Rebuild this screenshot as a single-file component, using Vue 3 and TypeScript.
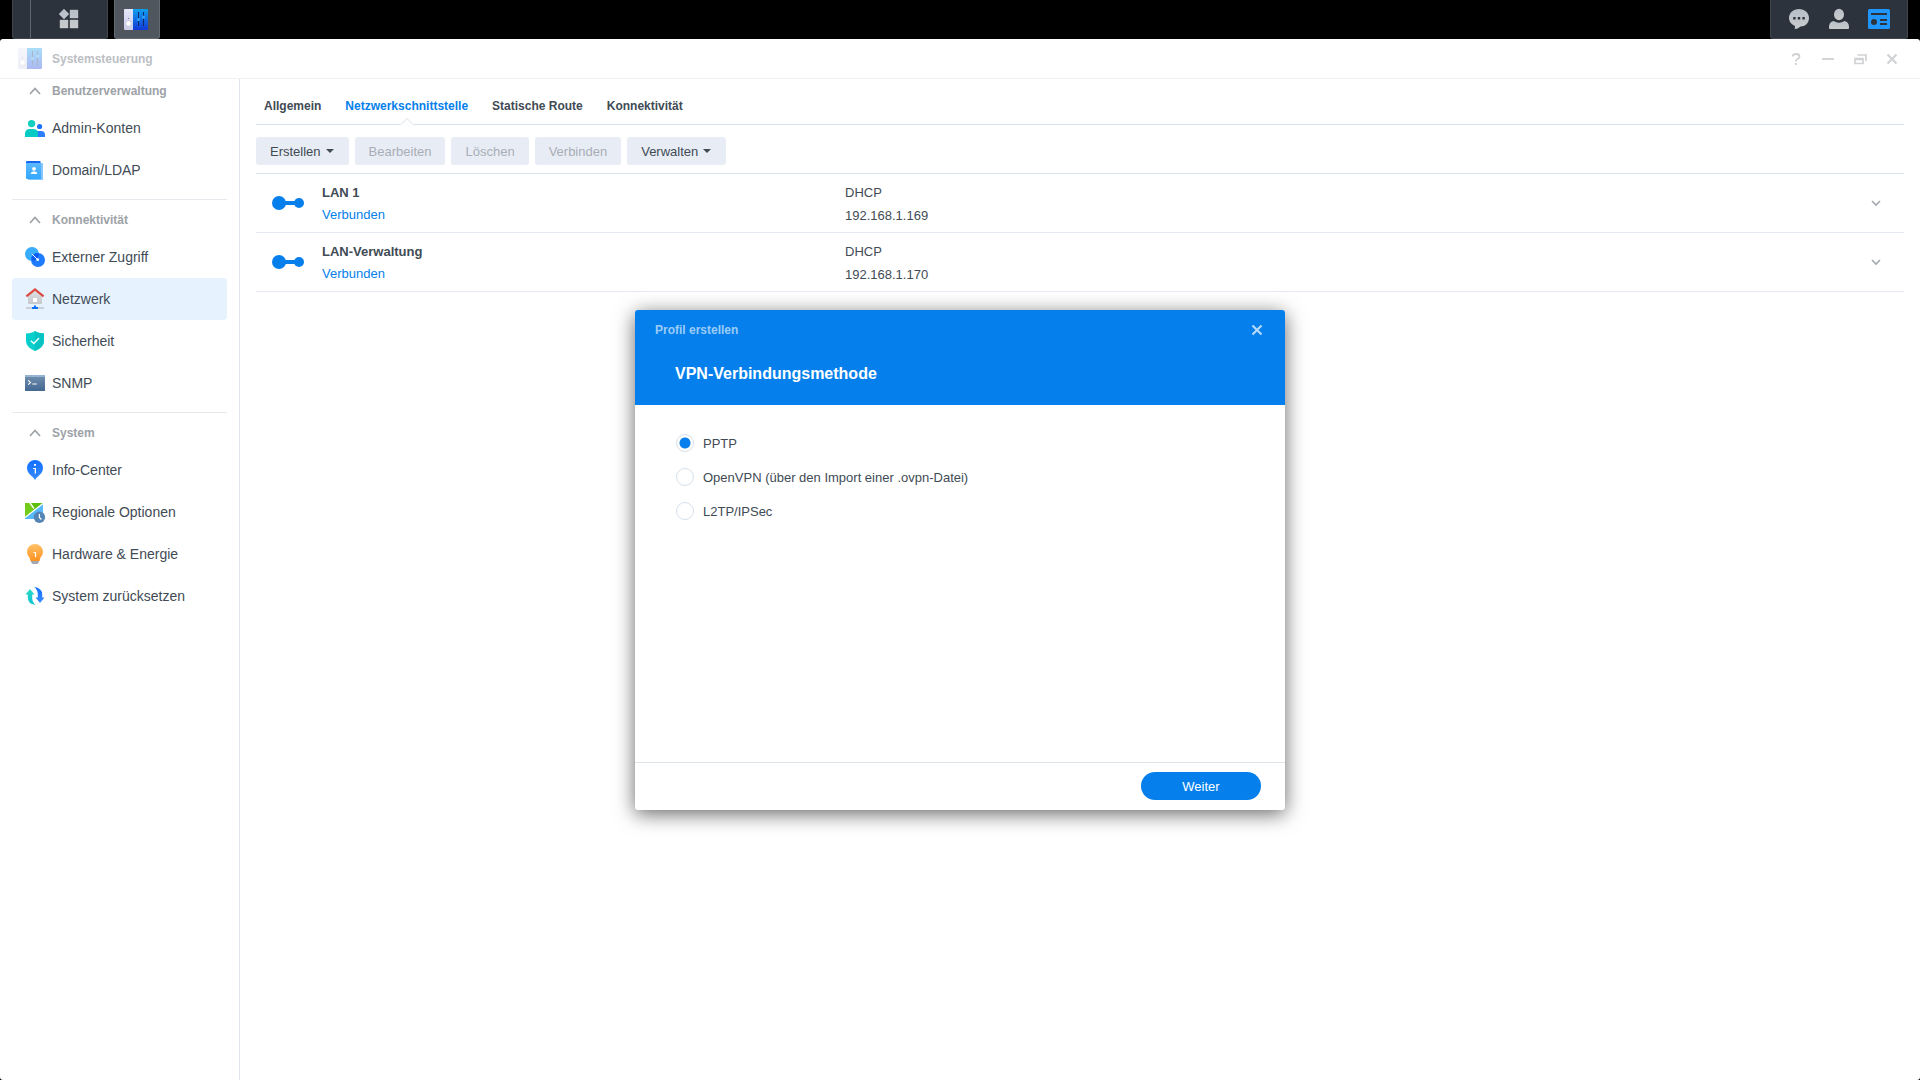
<script setup lang="ts">
import { ref } from 'vue'

interface NavItem { label: string; icon: string }
interface NavGroup { title: string; items: NavItem[] }
interface Iface { name: string; status: string; mode: string; ip: string }
interface ToolButton { label: string; menu?: boolean; disabled?: boolean }

const groups: NavGroup[] = [
  {
    title: 'Benutzerverwaltung',
    items: [
      { label: 'Admin-Konten', icon: 'users' },
      { label: 'Domain/LDAP', icon: 'directory' },
    ],
  },
  {
    title: 'Konnektivität',
    items: [
      { label: 'Externer Zugriff', icon: 'access' },
      { label: 'Netzwerk', icon: 'network' },
      { label: 'Sicherheit', icon: 'shield' },
      { label: 'SNMP', icon: 'terminal' },
    ],
  },
  {
    title: 'System',
    items: [
      { label: 'Info-Center', icon: 'info' },
      { label: 'Regionale Optionen', icon: 'region' },
      { label: 'Hardware & Energie', icon: 'bulb' },
      { label: 'System zurücksetzen', icon: 'reset' },
    ],
  },
]

const tabs: string[] = ['Allgemein', 'Netzwerkschnittstelle', 'Statische Route', 'Konnektivität']

const tools: ToolButton[] = [
  { label: 'Erstellen', menu: true },
  { label: 'Bearbeiten', disabled: true },
  { label: 'Löschen', disabled: true },
  { label: 'Verbinden', disabled: true },
  { label: 'Verwalten', menu: true },
]

const interfaces: Iface[] = [
  { name: 'LAN 1', status: 'Verbunden', mode: 'DHCP', ip: '192.168.1.169' },
  { name: 'LAN-Verwaltung', status: 'Verbunden', mode: 'DHCP', ip: '192.168.1.170' },
]

const methods: { id: string; label: string }[] = [
  { id: 'pptp', label: 'PPTP' },
  { id: 'openvpn', label: 'OpenVPN (über den Import einer .ovpn-Datei)' },
  { id: 'l2tp', label: 'L2TP/IPSec' },
]

const activeNav = ref('Netzwerk')
const activeTab = ref('Netzwerkschnittstelle')
const method = ref('pptp')
const dialogOpen = ref(true)
</script>

<template>
  <div class="desktop">
    <svg class="sprite" width="0" height="0" aria-hidden="true">
      <defs>
        <linearGradient id="g-panel" x1="0" y1="0" x2="0" y2="1"><stop offset="0" stop-color="#10a0ee" /><stop offset="1" stop-color="#1238d8" /></linearGradient>
        <linearGradient id="g-white" x1="0" y1="0" x2="0" y2="1"><stop offset="0" stop-color="#e4e7fa" /><stop offset="1" stop-color="#c9cde6" /></linearGradient>
        <linearGradient id="g-sky" x1="0" y1="0" x2="0" y2="1"><stop offset="0" stop-color="#5cb8ff" /><stop offset="1" stop-color="#33a8ff" /></linearGradient>
        <linearGradient id="g-blue" x1="0" y1="0" x2="0" y2="1"><stop offset="0" stop-color="#0f6fff" /><stop offset="1" stop-color="#3b8cff" /></linearGradient>
        <linearGradient id="g-term" x1="0" y1="0" x2="0" y2="1"><stop offset="0" stop-color="#7391b0" /><stop offset="1" stop-color="#426791" /></linearGradient>
        <linearGradient id="g-bulb" x1="0" y1="0" x2="0" y2="1"><stop offset="0" stop-color="#ffc268" /><stop offset="1" stop-color="#ff9220" /></linearGradient>
        <linearGradient id="g-house" x1="0" y1="0" x2="0" y2="1"><stop offset="0" stop-color="#dfe1e4" /><stop offset="1" stop-color="#c6c9cc" /></linearGradient>
        <linearGradient id="g-teal" x1="0" y1="0" x2="0" y2="1"><stop offset="0" stop-color="#2fd8c4" /><stop offset="1" stop-color="#08c4d2" /></linearGradient>
        <linearGradient id="g-tray" x1="0" y1="0" x2="0" y2="1"><stop offset="0" stop-color="#b6bfc9" /><stop offset="1" stop-color="#c9cbcc" /></linearGradient>
      </defs>
      <symbol id="i-panel" viewBox="0 0 24 21">
        <path d="M1 0H9V21H1Q0 21 0 20V1Q0 0 1 0Z" fill="url(#g-white)" />
        <path d="M9 0H23Q24 0 24 1V20Q24 21 23 21H9Z" fill="url(#g-panel)" />
        <circle cx="4.5" cy="14.5" r="2.8" fill="#fff" stroke="#b3b8d2" stroke-width=".6" />
        <circle cx="4.5" cy="9.3" r=".5" fill="#4a4f68" />
        <path d="M14.5 3V17M19.5 3V17" stroke="#0d2a66" stroke-width="1" />
        <circle cx="14.5" cy="10.5" r="1.6" fill="#2fa0f5" /><circle cx="19.5" cy="8.2" r="1.6" fill="#2fa0f5" />
      </symbol>
      <symbol id="i-users" viewBox="0 0 20 20">
        <circle cx="14.6" cy="8.5" r="2.6" fill="#1a73ff" />
        <path d="M11 19V13H16.2Q20 13 20 17V19Z" fill="#2a7dff" />
        <circle cx="6.6" cy="5.6" r="3.7" fill="#14cfbf" />
        <path d="M0 19V16Q0 11 5 11H8Q13 11 13 16V19Z" fill="#06cbc4" />
      </symbol>
      <symbol id="i-directory" viewBox="0 0 20 20">
        <path d="M2 1H15.5V4H1V2Q1 1 2 1Z" fill="#1668f0" />
        <path d="M15 3H17.5Q18 3 18 3.500V19.500Q18 20 17.500 20H3V18Z" fill="#85c6ff" />
        <path d="M1 3H16V19H2Q1 19 1 18Z" fill="url(#g-sky)" />
        <circle cx="9" cy="8.800" r="1.900" fill="#fff" /><path d="M5.800 14Q5.800 11.500 8 11.500H10Q12.200 11.500 12.200 14Z" fill="#fff" />
      </symbol>
      <symbol id="i-access" viewBox="0 0 20 20">
        <circle cx="7" cy="7" r="7" fill="#38adff" /><circle cx="13" cy="13" r="7" fill="#1f7bff" />
        <path d="M6.200 11A7 7 0 0 1 13.800 6.100 7 7 0 0 1 8 13.900 7 7 0 0 1 6.200 11Z" fill="#0b5cf5" />
        <path d="M6.800 6.800L12.500 12.500" stroke="#fff" stroke-width="1" /><circle cx="12.700" cy="12.700" r="1.400" fill="#fff" />
      </symbol>
      <symbol id="i-network" viewBox="0 0 20 20" overflow="visible">
        <path d="M3 7L10 1L17 7V14Q17 15 16 15H4Q3 15 3 14Z" fill="url(#g-house)" />
        <path d="M1.400 7.400L10 .5L18.600 7.400" fill="none" stroke="#dc4a41" stroke-width="2.200" />
        <rect x="8" y="9" width="4" height="4" fill="#fff" />
        <rect x="1" y="18" width="18" height="2" fill="#c9cfd6" /><path d="M7 20V18H9V16.500H11V18H13V20Z" fill="#0f6fff" />
      </symbol>
      <symbol id="i-shield" viewBox="0 0 20 20">
        <path d="M10 0Q13 2.200 19 2.500V10Q19 16 10 20Q1 16 1 10V2.500Q7 2.200 10 0Z" fill="#06cfcb" />
        <path d="M10 0Q13 2.200 19 2.500V10Q19 16 10 20Z" fill="#08c3c3" />
        <path d="M5.800 9.800L8.800 12.500L14 7" fill="none" stroke="#fff" stroke-width="1.300" />
      </symbol>
      <symbol id="i-terminal" viewBox="0 0 20 20">
        <rect y="2" width="20" height="16" rx=".6" fill="url(#g-term)" /><path d="M.6 2H19.400Q20 2 20 2.600V4H0V2.600Q0 2 .6 2Z" fill="#93b4d2" />
        <path d="M3.200 7.300L5.600 9.500L3.200 11.700M7.300 11H11.800" fill="none" stroke="#fff" stroke-width="1.100" />
      </symbol>
      <symbol id="i-info" viewBox="0 0 20 20">
        <path d="M10 0A8 8 0 0 1 18 8Q18 12 14 15.500Q11 18 10 20Q9 18 6 15.500Q2 12 2 8A8 8 0 0 1 10 0Z" fill="url(#g-blue)" />
        <path d="M9 4H11V5.800H9ZM8 8H11V13.500H9.700V9H8Z" fill="#fff" />
      </symbol>
      <symbol id="i-region" viewBox="0 0 20 20" overflow="visible">
        <rect y="1" width="18" height="16" rx=".6" fill="#59b9ff" />
        <path d="M0 1H18L0 16Z" fill="#5cbf0c" /><path d="M0 1H6L9 5L7 10L0 15Z" fill="#74cc1a" />
        <path d="M0 15.500L18 1.500M5 1L9 6.500" stroke="#fff" stroke-width="1.300" />
        <circle cx="14.400" cy="15.300" r="5.700" fill="#5585b5" /><path d="M14.400 12V15.500L16.400 17.500" fill="none" stroke="#fff" stroke-width="1.200" />
      </symbol>
      <symbol id="i-bulb" viewBox="0 0 20 20">
        <path d="M6 16H14V18L12.500 20H7.500L6 18Z" fill="#a2a8ae" />
        <path d="M10 0A8 8 0 0 1 18 8Q18 11 15.500 13.500L14.500 17H5.500L4.500 13.500Q2 11 2 8A8 8 0 0 1 10 0Z" fill="url(#g-bulb)" />
        <path d="M8.500 8.500H10.500V13" fill="none" stroke="#fff" stroke-width="1.200" />
      </symbol>
      <symbol id="i-reset" viewBox="0 0 20 20">
        <path d="M5 3L9.500 8.500H7.200V12Q7.200 16 10.500 18.900Q2.800 18 2.800 11.500V8.500H.5Z" fill="url(#g-teal)" />
        <path d="M15 17L19.500 11.500H17.200V8.500Q17.200 2 9.200 1Q12.800 4 12.800 8V11.500H10.500Z" fill="url(#g-blue)" />
      </symbol>
    </svg>

    <header class="taskbar">
      <div class="dock">
        <div class="launcher">
          <button class="launch" aria-label="Hauptmenü">
            <svg width="20" height="20" viewBox="0 0 20 20"><path d="M5 0L10 5L5 10L0 5Z M11 1h8v8h-8Z M1 11h8v8h-8Z M11 11h8v8h-8Z" fill="url(#g-tray)" stroke="url(#g-tray)" stroke-width=".4" stroke-linejoin="round" /></svg>
          </button>
        </div>
        <button class="task" aria-label="Systemsteuerung"><svg width="24" height="21"><use href="#i-panel" /></svg></button>
      </div>
      <div class="tray">
        <button aria-label="Benachrichtigungen">
          <svg width="20" height="20" viewBox="0 0 20 20"><path d="M10 0C15.500 0 20 3.800 20 9S16 17.500 11.500 17.500Q9 20 5.500 20Q6.500 18.500 5.800 16.800C2.500 15.500 0 12.600 0 9 0 3.800 4.500 0 10 0Z" fill="url(#g-tray)" /><path d="M4.200 8h2.400v2.400H4.200Z M8.800 8h2.400v2.400H8.800Z M13.400 8h2.400v2.400h-2.400Z" fill="#2d333d" /></svg>
        </button>
        <button aria-label="Benutzer">
          <svg width="20" height="20" viewBox="0 0 20 20"><ellipse cx="10" cy="5.500" rx="5" ry="5.800" fill="url(#g-tray)" /><path d="M4.500 12Q10 15.500 15.500 12Q20 13 20 18V19Q20 20 19 20H1Q0 20 0 19V18Q0 13 4.500 12Z" fill="url(#g-tray)" /></svg>
        </button>
        <button aria-label="Widgets">
          <svg width="22" height="20" viewBox="0 0 22 20"><rect width="22" height="20" rx="1.500" fill="#2196fa" /><path d="M3 4h16v2H3Z M12 10h7v2h-7Z M12 14h7v2h-7Z" fill="#2d333d" /><circle cx="6" cy="13" r="3" fill="#2d333d" /></svg>
        </button>
      </div>
    </header>

    <div class="window">
      <div class="titlebar">
        <svg class="faded" width="24" height="21"><use href="#i-panel" /></svg>
        <h1>Systemsteuerung</h1>
        <div class="controls">
          <button aria-label="Hilfe"><svg width="12" height="12" viewBox="0 0 12 12"><path d="M2.500 3.500Q2.500 1 6 1Q9.500 1 9.500 3.400Q9.500 5 7.700 5.800Q6 6.600 6 8.500M6 10V12" fill="none" stroke="#cfd1d3" stroke-width="1.800" /></svg></button>
          <button aria-label="Minimieren"><svg width="12" height="12" viewBox="0 0 12 12"><path d="M0 6H12" stroke="#d3d5d7" stroke-width="2" /></svg></button>
          <button aria-label="Verkleinern"><svg width="14" height="12" viewBox="0 0 14 12"><path d="M4.500 2H13V8M2 5.500H10V10.500H2ZM2 6.500H10" fill="none" stroke="#d0d2d4" stroke-width="1.700" /></svg></button>
          <button aria-label="Schließen"><svg width="12" height="12" viewBox="0 0 12 12"><path d="M1.500 1.500L10.500 10.500M10.500 1.500L1.500 10.500" stroke="#cfd1d3" stroke-width="2" /></svg></button>
        </div>
      </div>

      <div class="body">
        <nav class="sidebar">
          <section v-for="g in groups" :key="g.title" class="group">
            <h2>
              <svg width="12" height="8" viewBox="0 0 12 8"><path d="M1 7L6 1.500L11 7" fill="none" stroke="#9da2a7" stroke-width="1.700" /></svg>
              {{ g.title }}
            </h2>
            <a
              v-for="i in g.items"
              :key="i.label"
              href="#"
              class="nav-item"
              :class="{ active: i.label === activeNav }"
              @click.prevent="activeNav = i.label"
            >
              <svg width="20" height="20"><use :href="'#i-' + i.icon" /></svg>
              {{ i.label }}
            </a>
          </section>
        </nav>

        <main class="content">
          <div class="tabs" role="tablist">
            <button
              v-for="t in tabs"
              :key="t"
              role="tab"
              class="tab"
              :class="{ active: t === activeTab }"
              :aria-selected="t === activeTab"
              @click="activeTab = t"
            >
              {{ t }}
              <svg v-if="t === activeTab" class="notch" width="14" height="8" viewBox="0 0 14 8"><path d="M0 8L7 1L14 8Z" fill="#fff" /><path d="M1 7.500L7 1.500L13 7.500" fill="none" stroke="#d7e1eb" /></svg>
            </button>
          </div>

          <div class="toolbar">
            <button v-for="b in tools" :key="b.label" class="tool" :disabled="b.disabled">
              {{ b.label }}<span v-if="b.menu" class="caret"></span>
            </button>
          </div>

          <ul class="interfaces">
            <li v-for="n in interfaces" :key="n.name">
              <svg width="32" height="14" viewBox="0 0 32 14"><circle cx="7" cy="7" r="7" fill="#057feb" /><circle cx="27" cy="7" r="5" fill="#057feb" /><path d="M7 7H27" stroke="#057feb" stroke-width="4" /></svg>
              <div class="cell">
                <strong>{{ n.name }}</strong>
                <span class="status">{{ n.status }}</span>
              </div>
              <div class="cell address">
                <span>{{ n.mode }}</span>
                <span>{{ n.ip }}</span>
              </div>
              <button class="expand" :aria-label="n.name + ' aufklappen'"><svg width="10" height="6" viewBox="0 0 10 6"><path d="M1 1L5 5L9 1" fill="none" stroke="#a3a8ae" stroke-width="1.600" /></svg></button>
            </li>
          </ul>
        </main>
      </div>

      <div v-if="dialogOpen" class="overlay">
        <section class="dialog" role="dialog" aria-labelledby="dialog-step">
          <header class="dialog-head">
            <div class="dialog-bar">
              <span>Profil erstellen</span>
              <button aria-label="Dialog schließen" @click="dialogOpen = false"><svg width="12" height="12" viewBox="0 0 12 12"><path d="M1.500 1.500L10.500 10.500M10.500 1.500L1.500 10.500" stroke="#b4d9f9" stroke-width="2.200" /></svg></button>
            </div>
            <h2 id="dialog-step">VPN-Verbindungsmethode</h2>
          </header>
          <div class="dialog-body">
            <label v-for="m in methods" :key="m.id">
              <input v-model="method" type="radio" name="method" :value="m.id" />
              <span>{{ m.label }}</span>
            </label>
          </div>
          <footer class="dialog-foot">
            <button class="primary">Weiter</button>
          </footer>
        </section>
      </div>
    </div>
  </div>
</template>

<style>
body {
  margin: 0;
  background: #000;
}
</style>

<style scoped>
.desktop {
  display: flex;
  flex-direction: column;
  min-height: 100vh;
  background: #000;
  color: #414b55;
  font: 13px/18px "Liberation Sans", Arial, sans-serif;
}
.desktop * {
  box-sizing: border-box;
}
.sprite {
  position: absolute;
}
svg {
  display: block;
  flex: none;
  overflow: visible;
}
button {
  display: flex;
  align-items: center;
  justify-content: center;
  padding: 0;
  border: 0;
  background: none;
  color: inherit;
  font: inherit;
  cursor: pointer;
}
h1, h2, ul {
  margin: 0;
  padding: 0;
}

.taskbar {
  display: flex;
  justify-content: space-between;
  height: 39px;
  padding: 0 12px;
}
.dock {
  display: flex;
  gap: 6px;
}
.launcher {
  display: flex;
  width: 96px;
  padding-left: 17px;
  border: 1px solid #3f464f;
  border-top: 0;
  border-radius: 0 0 3px 3px;
  background: #2d333d;
}
.launch {
  flex: 1;
  border-left: 1px solid #5f666e;
}
.task {
  width: 46px;
  border: 1px solid #646a71;
  border-top: 0;
  border-radius: 0 0 3px 3px;
  background: #50565e;
}
.task svg {
  margin-left: -2px;
}
.tray {
  display: flex;
  width: 138px;
  padding-left: 8px;
  border: 1px solid #3f464f;
  border-top: 0;
  border-radius: 0 0 3px 3px;
  background: #2d333d;
}
.tray button {
  width: 40px;
}

.window {
  position: relative;
  display: flex;
  flex: 1;
  flex-direction: column;
  border-radius: 3px;
  background: #fff;
}
.titlebar {
  display: flex;
  align-items: center;
  gap: 10px;
  height: 40px;
  padding: 0 16px 0 18px;
  border-bottom: 1px solid #eff3f6;
}
.faded {
  opacity: .35;
}
h1 {
  color: #bcc0c4;
  font-size: 12px;
  line-height: 18px;
}
.controls {
  display: flex;
  margin-left: auto;
}
.controls button {
  width: 24px;
  height: 24px;
  margin-left: 8px;
}

.body {
  display: flex;
  flex: 1;
}
.sidebar {
  width: 240px;
  padding: 0 12px;
  border-right: 1px solid #e1e6ec;
}
.group {
  padding-bottom: 8px;
}
.group + .group {
  padding-top: 8px;
  border-top: 1px solid #e6eaef;
}
.group h2 {
  display: flex;
  align-items: center;
  gap: 11px;
  height: 28px;
  padding: 0 0 4px 17px;
  color: #9da2a7;
  font-size: 12px;
  line-height: 24px;
}
.nav-item {
  display: flex;
  align-items: center;
  gap: 7px;
  height: 42px;
  padding-left: 13px;
  border-radius: 4px;
  color: #414b55;
  font-size: 14px;
  text-decoration: none;
}
.nav-item.active {
  background: #e6f2fe;
}

.content {
  flex: 1;
  min-width: 0;
  padding: 0 16px;
}
.tabs {
  display: flex;
  gap: 24px;
  height: 46px;
  padding: 8px 8px 0;
  border-bottom: 1px solid #d7e1eb;
}
.tab {
  position: relative;
  font-size: 12px;
  font-weight: bold;
}
.tab.active {
  color: #057feb;
}
.notch {
  position: absolute;
  bottom: -1px;
  left: calc(50% - 7px);
}
.toolbar {
  display: flex;
  gap: 6px;
  padding: 12px 0 8px;
  border-bottom: 1px solid #d7e1eb;
}
.tool {
  height: 28px;
  padding: 2px 14px 0;
  border-radius: 3px;
  background: #e8edf5;
}
.tool:disabled {
  color: #a8aeb7;
  cursor: default;
}
.caret {
  margin: 0 1px 2px 5px;
  border: 4px solid transparent;
  border-top-color: #414b55;
  border-bottom: 0;
}
.interfaces {
  list-style: none;
}
.interfaces li {
  position: relative;
  display: grid;
  grid-template-columns: 50px 1fr 2fr;
  align-items: center;
  height: 59px;
  padding: 0 13px 0 16px;
  border-bottom: 1px solid #e6eaf1;
}
.cell {
  display: flex;
  flex-direction: column;
  align-self: start;
  gap: 4px;
  padding-top: 10px;
}
.address {
  gap: 5px;
}
.status {
  color: #057feb;
}
.expand {
  position: absolute;
  right: 16px;
  width: 24px;
  height: 24px;
}

.overlay {
  position: absolute;
  inset: 0;
  display: flex;
  align-items: center;
  justify-content: center;
  padding-top: 1px;
}
.dialog {
  display: flex;
  flex-direction: column;
  width: 650px;
  height: 500px;
  border-radius: 3px;
  background: #fff;
  box-shadow: 0 4px 20px rgba(0, 0, 0, .6);
}
.dialog-head {
  height: 95px;
  border-radius: 3px 3px 0 0;
  background: #057feb;
}
.dialog-bar {
  display: flex;
  align-items: center;
  justify-content: space-between;
  height: 40px;
  padding: 0 16px 0 20px;
  color: #9bccf7;
  font-size: 12px;
  font-weight: bold;
}
.dialog-bar button {
  width: 24px;
  height: 24px;
}
.dialog-head h2 {
  padding-left: 40px;
  color: #fff;
  font-size: 16px;
  line-height: 48px;
}
.dialog-body {
  display: flex;
  flex: 1;
  flex-direction: column;
  gap: 6px;
  padding: 24px 40px;
}
.dialog-body label {
  display: flex;
  align-items: center;
  gap: 9px;
  height: 28px;
}
.dialog-body span {
  padding-top: 2px;
}
input[type="radio"] {
  flex: none;
  width: 18px;
  height: 18px;
  margin: 0 0 0 1px;
  border: 1px solid #d7e1eb;
  border-radius: 50%;
  appearance: none;
  background: #fff;
}
input[type="radio"]:checked {
  background: radial-gradient(circle, #057feb 5px, #fff 6px);
}
.dialog-foot {
  display: flex;
  align-items: flex-start;
  justify-content: flex-end;
  height: 48px;
  padding: 9px 24px 0;
  border-top: 1px solid #dde5ec;
}
.primary {
  width: 120px;
  height: 28px;
  padding-top: 2px;
  border-radius: 14px;
  background: #057feb;
  color: #fff;
}
</style>
